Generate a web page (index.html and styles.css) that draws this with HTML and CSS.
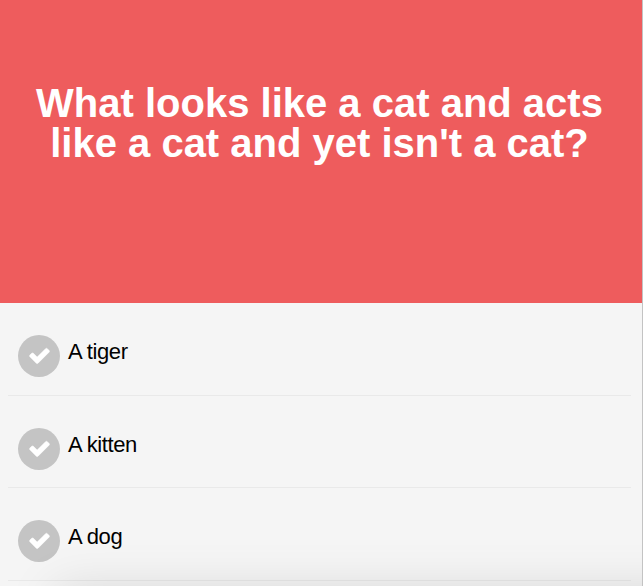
FILE: index.html
```html
<!DOCTYPE html>
<html lang="en">
<head>
  <meta charset="UTF-8">
  <title>Quiz</title>
  <meta name="viewport" content="width=device-width, initial-scale=1.0">
  <link rel="stylesheet" href="styles.css">
</head>
<body>
  <div class="quiz">
    <header class="question">
      <h1>What looks like a cat and acts<br>like a cat and yet isn't a cat?</h1>
    </header>
    <ul class="answers">
      <li>
        <span class="check"><svg viewBox="0 0 1792 1792"><path d="M1671 566q0 40-28 68l-724 724-136 136q-28 28-68 28t-68-28l-136-136-362-362q-28-28-28-68t28-68l136-136q28-28 68-28t68 28l294 295 656-657q28-28 68-28t68 28l136 136q28 28 28 68z"/></svg></span>
        <span class="label">A tiger</span>
      </li>
      <li>
        <span class="check"><svg viewBox="0 0 1792 1792"><path d="M1671 566q0 40-28 68l-724 724-136 136q-28 28-68 28t-68-28l-136-136-362-362q-28-28-28-68t28-68l136-136q28-28 68-28t68 28l294 295 656-657q28-28 68-28t68 28l136 136q28 28 28 68z"/></svg></span>
        <span class="label">A kitten</span>
      </li>
      <li>
        <span class="check"><svg viewBox="0 0 1792 1792"><path d="M1671 566q0 40-28 68l-724 724-136 136q-28 28-68 28t-68-28l-136-136-362-362q-28-28-28-68t28-68l136-136q28-28 68-28t68 28l294 295 656-657q28-28 68-28t68 28l136 136q28 28 28 68z"/></svg></span>
        <span class="label">A dog</span>
      </li>
    </ul>
    <div class="shade"></div>
  </div>
</body>
</html>
```
FILE: styles.css
```css
* { box-sizing: border-box; }
body { margin: 0; font-family: "Liberation Sans", Arial, sans-serif; }
.quiz { position: relative; height: 586px; overflow: hidden; background: #f5f5f5; border-right: 1px solid #c3c3c3; }
.question { height: 303px; padding-top: 83px; background: #ee5c5d; color: #fff; text-align: center; }
.question h1 { margin: 0; padding-right: 3px; font-size: 40px; line-height: 40px; white-space: nowrap; }
.answers { margin: 0; padding: 0 11px 0 8px; list-style: none; }
.answers li { display: flex; height: 92.5px; padding: 32px 10px 0; border-bottom: 1px solid #e9e9e9; }
.check { width: 42px; height: 42px; padding: 9px 9px 9px 10px; border-radius: 50%; background: #c4c4c4; }
.check svg { display: block; width: 23px; height: 23px; fill: #fff; stroke: #fff; stroke-width: 40; }
.label { margin: 4px 0 0 8px; font-size: 22px; line-height: 26px; letter-spacing: -0.4px; color: #000; }
/* soft shadow along the bottom edge */
.shade { position: absolute; left: 55px; right: -60px; top: 590px; height: 80px; box-shadow: 0 0 50px rgba(0, 0, 0, 0.13); pointer-events: none; }
```
